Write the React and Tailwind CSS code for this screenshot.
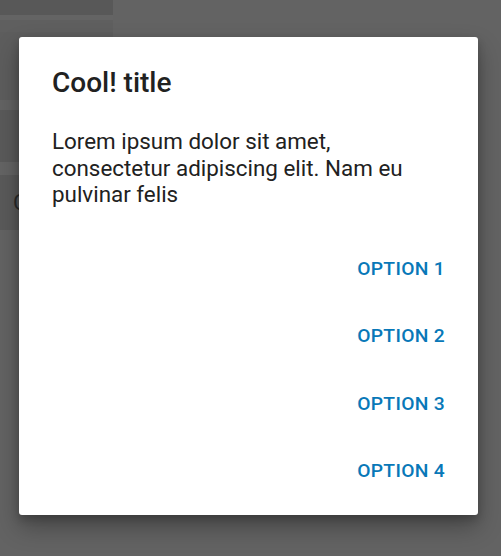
import React from "react";

const options = ["OPTION 1", "OPTION 2", "OPTION 3", "OPTION 4"];

const App = () => {
  return (
    <div
      className="relative w-[501px] h-[556px] overflow-hidden bg-[#636363]"
      style={{ fontFamily: "Roboto, 'Noto Sans', sans-serif" }}
    >
      {/* dimmed screen behind the dialog */}
      <div className="flex flex-col w-[113px]">
        <div className="h-[15px] bg-[#585858]" />
        <div className="h-[5px] bg-[#646464]" />
        <div className="h-[12px] bg-[#5f5f5f]" />
        <div className="h-[68px] bg-[#5d5d5d]" />
        <div className="h-[10px] bg-[#636363]" />
        <div className="h-[52px] bg-[#5a5a5a]" />
        <div className="h-[13px] bg-[#646464]" />
        <div className="h-[55px] bg-[#5a5a5a] flex items-center pl-[13px] text-[22px] text-[#2a2a2a]">
          C
        </div>
      </div>

      {/* dialog */}
      <div className="absolute left-[19px] top-[37px] w-[459px] bg-white rounded-[3px] shadow-[0_12px_24px_rgba(0,0,0,0.3),0_4px_8px_rgba(0,0,0,0.2)]">
        <div className="px-[33px] pt-[30px]">
          <h2 className="text-[28px] leading-[32px] font-medium text-[#212121]">Cool! title</h2>
          <p className="mt-[29px] text-[22.4px] leading-[26.5px] text-[#212121]">
            Lorem ipsum dolor sit amet, consectetur adipiscing elit. Nam eu pulvinar felis
          </p>
        </div>
        <div className="flex flex-col mt-[28px] pb-[9px] pr-[33px]">
          {options.map((label) => (
            <button
              key={label}
              className="h-[67.5px] flex items-center justify-end text-[19.25px] font-medium tracking-[0.3px] text-[#0878b8]"
            >
              {label}
            </button>
          ))}
        </div>
      </div>
    </div>
  );
};

export default App;
